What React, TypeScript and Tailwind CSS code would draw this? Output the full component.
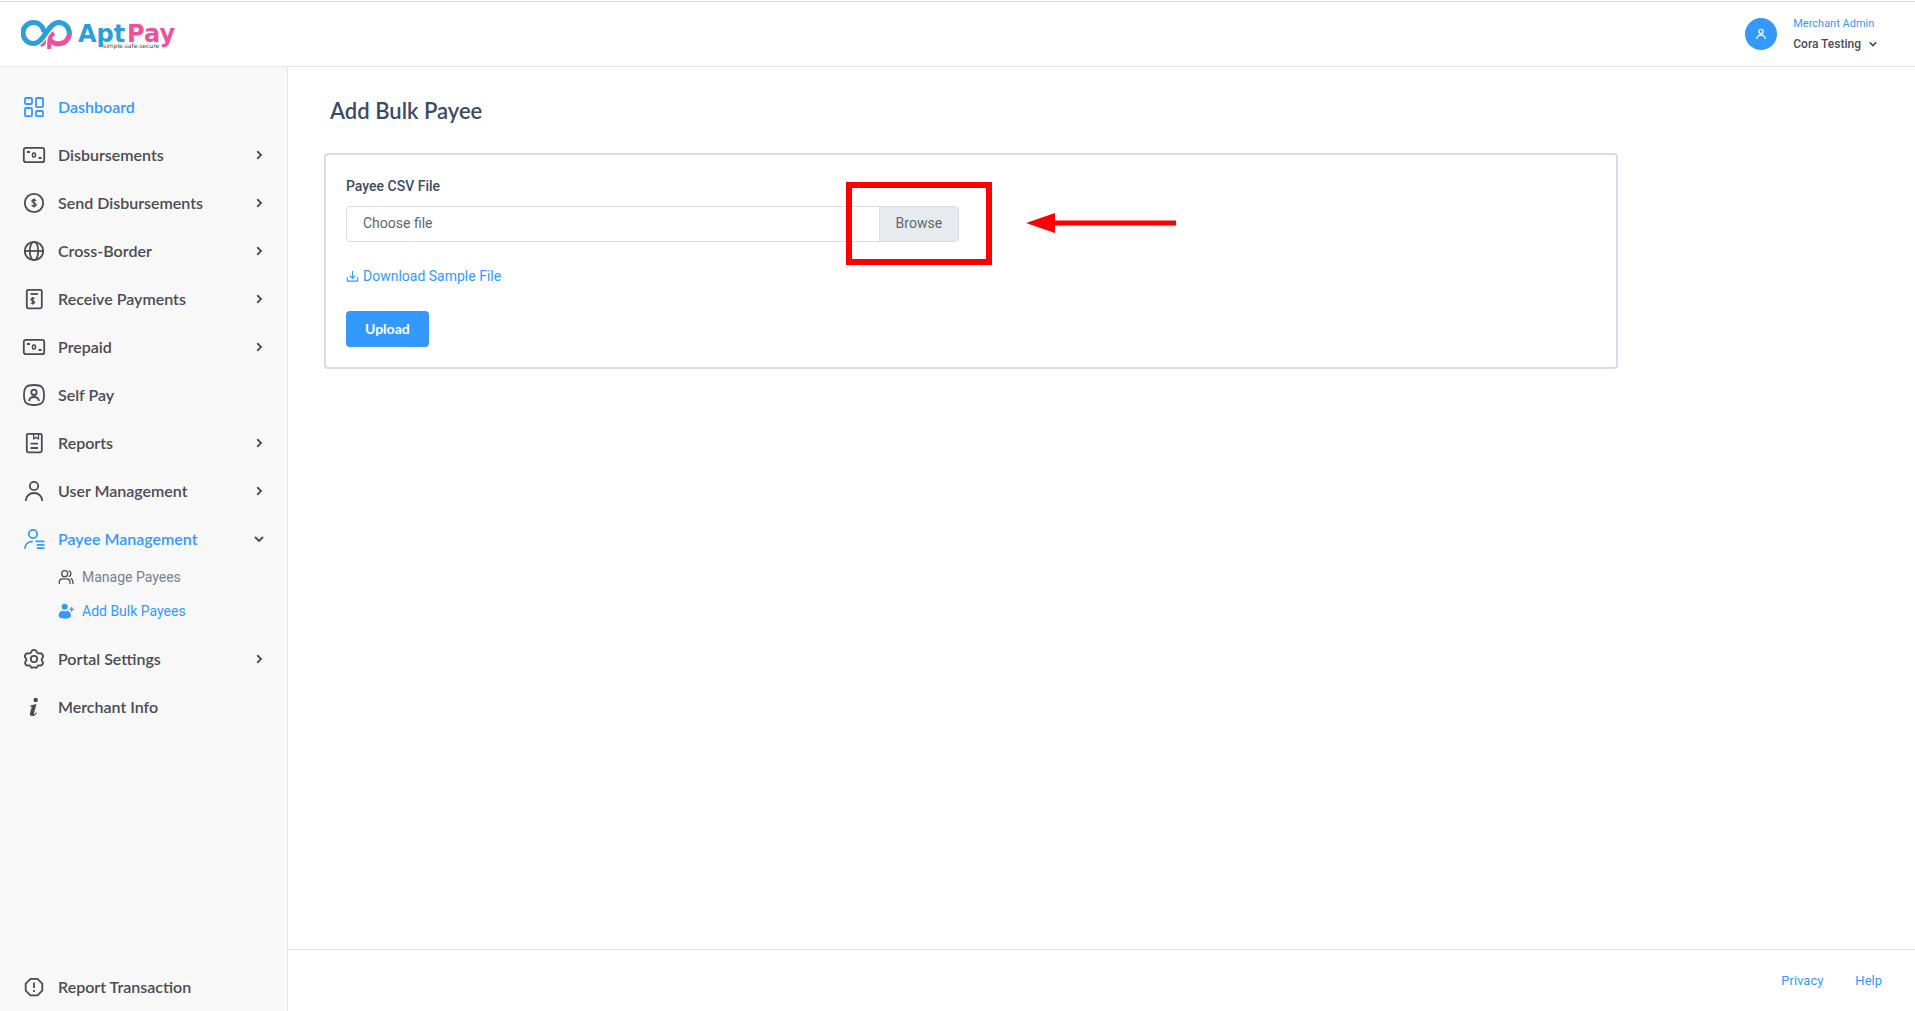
import type { ReactNode } from 'react'

type NavItem = {
  label: string
  icon: ReactNode
  active?: boolean
  expandable?: boolean
  children?: { label: string; icon: ReactNode; active?: boolean }[]
}

const Icon = ({ children, size = 24, weight = 1.8 }: { children: ReactNode; size?: number; weight?: number }) => (
  <svg
    width={size}
    height={size}
    viewBox="0 0 24 24"
    fill="none"
    stroke="currentColor"
    strokeWidth={weight}
    strokeLinejoin="round"
    aria-hidden="true"
    className="shrink-0"
  >
    {children}
  </svg>
)

const Chevron = ({ down = false, small = false }: { down?: boolean; small?: boolean }) => (
  <svg
    width={small ? 8 : 10}
    height={small ? 8 : 10}
    viewBox="0 0 10 10"
    fill="none"
    stroke="currentColor"
    strokeWidth="1.9"
    aria-hidden="true"
    className="shrink-0 text-[#4b4b55]"
  >
    {down ? <path d="M1 3 5 7 9 3" /> : <path d="M3.2 1.2 7 5 3.2 8.8" />}
  </svg>
)

const dollar = 'M14 9.9c-.3-.7-1-1.1-2-1.1-1.2 0-2 .6-2 1.5 0 2.1 4.1 1.1 4.1 3.3 0 1-.9 1.6-2.1 1.6-1.1 0-1.900-.4-2.200-1.200M12 7.500v9'

const BanknoteIcon = () => (
  <Icon>
    <rect x="1.8" y="4.8" width="20.4" height="14.4" rx="2" />
    <rect x="10.5" y="10" width="3" height="4" rx="1.2" strokeWidth="1.5" />
    <path d="M5 9h3M16.5 15h3" strokeWidth="1.8" />
  </Icon>
)

const UserIcon = ({ size = 24, weight = 1.8 }: { size?: number; weight?: number }) => (
  <Icon size={size} weight={weight}>
    <circle cx="12" cy="7" r="4.2" />
    <path d="M3.7 22c0-4.700 3.700-8 8.300-8s8.300 3.300 8.300 8" />
  </Icon>
)

const navItems: NavItem[] = [
  {
    label: 'Dashboard',
    active: true,
    icon: (
      <Icon>
        <rect x="3" y="3" width="7" height="6" rx="1" />
        <rect x="14" y="3" width="7" height="9.2" rx="1" />
        <rect x="3" y="13" width="7" height="8.2" rx="1" />
        <rect x="14" y="16" width="7" height="5.2" rx="1" />
      </Icon>
    ),
  },
  { label: 'Disbursements', icon: <BanknoteIcon />, expandable: true },
  {
    label: 'Send Disbursements',
    icon: (
      <Icon>
        <circle cx="12" cy="12" r="9.2" />
        <path d={dollar} strokeWidth="1.4" />
      </Icon>
    ),
    expandable: true,
  },
  {
    label: 'Cross-Border',
    icon: (
      <Icon>
        <circle cx="12" cy="12" r="9.2" />
        <ellipse cx="12" cy="12" rx="4.2" ry="9.2" />
        <path d="M3 12h18" />
      </Icon>
    ),
    expandable: true,
  },
  {
    label: 'Receive Payments',
    icon: (
      <Icon>
        <rect x="4.800" y="2.8" width="15" height="18.5" rx="1.5" />
        <path d="M8.5 7h7.5" />
        <path d={dollar} strokeWidth="1.5" transform="translate(.5 3.7) scale(.85)" />
      </Icon>
    ),
    expandable: true,
  },
  { label: 'Prepaid', icon: <BanknoteIcon />, expandable: true },
  {
    label: 'Self Pay',
    icon: (
      <Icon>
        <path d="M12 2c7.8 0 10 2.200 10 10s-2.200 10-10 10S2 19.800 2 12 4.200 2 12 2Z" />
        <circle cx="12" cy="9.3" r="2.7" />
        <path d="M7 18c.4-2.400 2.300-4 5-4s4.600 1.600 5 4" />
      </Icon>
    ),
  },
  {
    label: 'Reports',
    icon: (
      <Icon>
        <rect x="4.8" y="2.8" width="15" height="18.5" rx="1.5" />
        <path d="M11.7 3v5l2.4-1.6L16.5 8V3" strokeWidth="1.3" />
        <path d="M8.5 12.7h7.5M8.5 17h7.5" />
      </Icon>
    ),
    expandable: true,
  },
  { label: 'User Management', icon: <UserIcon />, expandable: true },
  {
    label: 'Payee Management',
    active: true,
    expandable: true,
    icon: (
      <Icon>
        <circle cx="11" cy="7" r="4.2" />
        <path d="M2.8 21.8c.2-4.300 3.400-7.300 8-7.500M13.500 14.300h9M14.800 17.800h7.700M14.800 21.200h7.700" />
      </Icon>
    ),
    children: [
      {
        label: 'Manage Payees',
        icon: (
          <Icon size={16} weight={1.9}>
            <circle cx="10" cy="7" r="4.5" />
            <path d="M2 22.500v-3c0-3 2-4.700 5-4.700h6c3 0 5 1.700 5 4.700v3M16 2.700c4.500 1 4.500 7.600 0 8.600M19 14c2.700 1 3.500 3.500 3.500 8.500" />
          </Icon>
        ),
      },
      {
        label: 'Add Bulk Payees',
        active: true,
        icon: (
          <Icon size={16} weight={2}>
            <circle cx="10" cy="5.5" r="4.5" fill="currentColor" strokeWidth="0" />
            <path
              d="M1 18c0-4 3-6.500 6-6.500 2 1 4 1 6 0 3 0 6.500 2.500 6.500 6.500 0 3.500-2.500 5.500-9.300 5.500S1 21.500 1 18Z"
              fill="currentColor"
              strokeWidth="0"
            />
            <path d="M20.5 6v7M17 9.500h7" />
          </Icon>
        ),
      },
    ],
  },
  {
    label: 'Portal Settings',
    expandable: true,
    icon: (
      <Icon>
        <circle cx="12" cy="12" r="3.2" />
        <path d="M9 5.200C9.600 3.500 10.500 2.800 12 2.800s2.400.7 3 2.400c.3.900 1.100 1.400 2 1.200 1.800-.4 2.900 0 3.700 1.400s.6 2.500-.7 3.800c-.7.700-.7 1.300-.1 2 1.200 1.400 1.400 2.600.5 3.800s-1.900 1.500-3.400 1c-.7-.2-1.200.1-1.500.8-.4 1.200-1.100 1.800-2 1.500-.6-.2-.9-.6-1.500-.6s-.9.400-1.500.6c-.9.300-1.600-.3-2-1.500-.3-.7-.8-1-1.500-.8-1.500.5-2.500.2-3.400-1s-.7-2.400.5-3.800c.6-.7.600-1.300-.1-2-1.300-1.300-1.500-2.400-.7-3.800s1.900-1.800 3.700-1.400c.9.200 1.700-.3 2-1.200Z" />
      </Icon>
    ),
  },
  {
    label: 'Merchant Info',
    icon: (
      <svg width="24" height="24" viewBox="0 0 24 24" fill="currentColor" aria-hidden="true" className="shrink-0">
        <circle cx="13.7" cy="5" r="2.2" />
        <path d="M8.3 10.600 14.500 9l-2.600 9.500c-.2.900.5.800 1.200 0l1-1.200.8.600C13.300 20.400 11.700 21 10.200 21c-2 0-2.700-1.200-2.200-3l1.600-5.700c.2-.8-.1-.9-1.300-.9Z" />
      </svg>
    ),
  },
]

const NavRow = ({ item }: { item: NavItem }) => (
  <li>
    <a
      href="#"
      className={`flex h-12 items-center gap-3 pr-[23px] pl-[22px] text-base font-semibold ${
        item.active ? 'text-[#3399ff]' : 'text-[#4b4b55]'
      }`}
    >
      {item.icon}
      <span className="grow">{item.label}</span>
      {item.expandable && <Chevron down={!!item.children} />}
    </a>
    {item.children && (
      <ul className="flex flex-col gap-1.5 pb-2.5 pl-[58px]">
        {item.children.map((child) => (
          <li key={child.label}>
            <a
              href="#"
              className={`flex h-7 items-center gap-2 font-[Roboto,sans-serif] text-sm ${
                child.active ? 'text-[#3399ff]' : 'text-[#768192]'
              }`}
            >
              <span className={child.active ? '' : 'text-[#4b4b55]'}>{child.icon}</span>
              {child.label}
            </a>
          </li>
        ))}
      </ul>
    )}
  </li>
)

const Logo = () => (
  <svg width="158" height="34" viewBox="0 0 158 34" role="img" aria-label="AptPay simple.safe.secure">
    <g fill="none" strokeWidth="5">
      <path d="M48.500 16c-.2 6.200-5 10.800-11 10.800-3.400 0-6-1.200-8.500-3.500" stroke="#ef4f9d" />
      <path d="M33 16c-3.500 2.500-4.800 5.500-4.800 9.500V32" stroke="#ef4f9d" strokeWidth="4" />
      <path d="M24.500 23.500c-1.300 2-3 3.600-5 5 1.500 1.200 4 .3 4.600-1.500Z" fill="#ef4f9d" stroke="#ef4f9d" strokeWidth="1" />
      <path
        d="M48.500 16.500C48.200 10.300 43.900 5.500 37.600 5.500c-11 0-14.300 21-25.100 21A10.500 10.500 0 1 1 23 15.500"
        stroke="#2a9fd9"
      />
    </g>
    <g fontFamily="'DejaVu Sans', sans-serif" fontSize="24" fontWeight="700">
      <text x="57" y="25" fill="#2a9fd9">Apt</text>
      <text x="106" y="25" fill="#ef4f9d">Pay</text>
    </g>
    <text x="82" y="31" fontFamily="'DejaVu Sans', sans-serif" fontSize="6" fill="#444">simple.safe.secure</text>
  </svg>
)

const Header = () => (
  <header className="flex h-[65px] items-center justify-between border-b border-[#e3e8f0] pr-[38px] pl-[21px]">
    <a href="#">
      <Logo />
    </a>
    <button type="button" className="flex items-center gap-4 text-left">
      <span className="flex size-8 items-center justify-center rounded-full bg-[#3399ff] text-white">
        <UserIcon size={12} weight={2.6} />
      </span>
      <span className="flex flex-col text-xs leading-5">
        <span className="text-[11px] leading-5 text-[#3399ff]">Merchant Admin</span>
        <span className="flex items-center gap-2 font-medium text-[#4b4b55]">
          Cora Testing
          <Chevron down small />
        </span>
      </span>
    </button>
  </header>
)

const Sidebar = () => (
  <nav className="flex w-72 shrink-0 flex-col justify-between border-r border-[#e4e5f0] bg-[#f8f8f8] pt-4 font-[Lato,sans-serif]">
    <ul>
      {navItems.map((item) => (
        <NavRow key={item.label} item={item} />
      ))}
    </ul>
    <ul>
      <NavRow
        item={{
          label: 'Report Transaction',
          icon: (
            <Icon>
              <path d="M8.5 3.800h7l4.800 4.800v7l-4.800 4.800h-7l-4.800-4.800v-7Z" />
              <path d="M12 7.500v5.500M12 15v2" />
            </Icon>
          ),
        }}
      />
    </ul>
  </nav>
)

/* Red frame round the Browse button, with an arrow pointing at it */
const BrowseCallout = () => (
  <div className="pointer-events-none absolute -top-6 -right-[33px] h-[83px] w-[146px] border-6 border-[#ff0000]">
    <svg width="150" height="20" viewBox="0 0 150 20" className="absolute top-[25px] left-[174px]" fill="#ff0000" aria-hidden="true">
      <path d="M0 10 29 0v7.500h121v5H29V20Z" />
    </svg>
  </div>
)

const UploadCard = () => (
  <form className="w-5/6 rounded border-2 border-[#d8dbe8] px-5 pt-5 pb-5 text-sm">
    <div className="w-1/2 pr-3">
      <label htmlFor="payee-csv" className="flex h-[22px] items-center font-medium text-[#3c4b64]">
        Payee CSV File
      </label>
      <div className="relative mt-[9px]">
        <input id="payee-csv" type="file" accept=".csv" className="peer sr-only" />
        <label
          htmlFor="payee-csv"
          className="flex h-9 overflow-hidden rounded border border-[#d8dbe8] leading-8 text-[#5c6873] peer-focus:border-[#3399ff]"
        >
          <span className="grow px-4">Choose file</span>
          <span className="border-l border-[#d8dbe8] bg-[#e8ebee] px-4">Browse</span>
        </label>
        <BrowseCallout />
      </div>
    </div>
    <a href="#" className="mt-6 flex h-5 w-fit items-center gap-1 text-[#3399ff]">
      <Icon size={13} weight={2.2}>
        <path d="M12 2v13M7 10.500l5 5 5-5M2.500 13.500v7h19v-7" />
      </Icon>
      Download Sample File
    </a>
    <button type="button" className="mt-[25px] h-9 rounded bg-[#3399ff] px-[19px] font-[Lato,sans-serif] font-bold text-white">
      Upload
    </button>
  </form>
)

export default function App() {
  return (
    <div className="flex min-h-screen flex-col bg-white pt-px font-[Roboto,sans-serif]">
      <div className="border-t border-[#d9dcdf]" />
      <Header />
      <div className="flex grow">
        <Sidebar />
        <div className="flex grow flex-col">
          <main className="grow pt-7 pr-[38px] pl-9">
            <h1 className="px-1.5 font-[Lato,sans-serif] text-[22px] leading-8 font-semibold text-[#3c4b64]">
              Add Bulk Payee
            </h1>
            <div className="mt-[26px]">
              <UploadCard />
            </div>
          </main>
          <footer className="flex h-[62px] items-center justify-end gap-8 border-t border-[#e4e5f0] px-[33px] text-[13px] text-[#3399ff]">
            <a href="#">Privacy</a>
            <a href="#">Help</a>
          </footer>
        </div>
      </div>
    </div>
  )
}
